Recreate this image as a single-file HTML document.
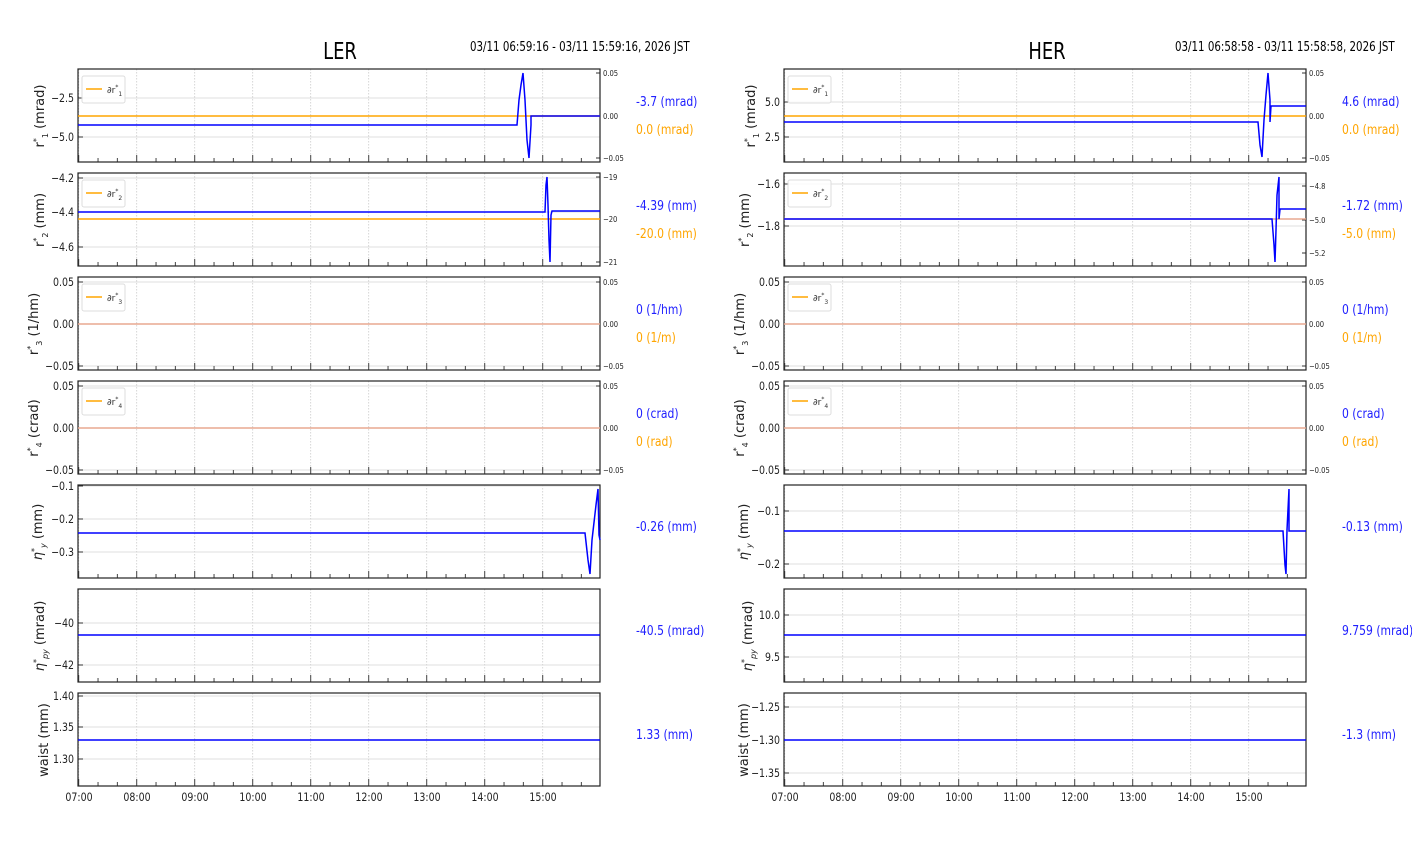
<!DOCTYPE html>
<html><head><meta charset="utf-8">
<style>
html,body{margin:0;padding:0;background:#fff;width:1412px;height:864px;overflow:hidden}
svg{display:block}
.t{font-family:"DejaVu Sans","Liberation Sans",sans-serif;font-size:11.5px;fill:#222}
.s{font-family:"DejaVu Sans","Liberation Sans",sans-serif;font-size:8px;fill:#222}
.yl{font-family:"DejaVu Sans","Liberation Sans",sans-serif;font-size:13px;fill:#222}
.b{font-family:"DejaVu Sans","Liberation Sans",sans-serif;font-size:13.5px;fill:#2020ff}
.o{font-family:"DejaVu Sans","Liberation Sans",sans-serif;font-size:13.5px;fill:#ffa500}
.ti{font-family:"DejaVu Sans","Liberation Sans",sans-serif;font-size:23px;fill:#000}
.dt{font-family:"DejaVu Sans","Liberation Sans",sans-serif;font-size:13.5px;fill:#000}
.lg{font-family:"DejaVu Sans","Liberation Sans",sans-serif;font-size:9px;fill:#333}
</style></head><body>
<svg id="s" width="1412" height="864" xmlns="http://www.w3.org/2000/svg">
<g id="grid"></g>
<g id="data"></g>
<text class="ti" x="340" y="59" text-anchor="middle">LER</text>
<text class="dt" x="470" y="51">03/11 06:59:16 - 03/11 15:59:16, 2026 JST</text>
<text class="ti" x="1047" y="59" text-anchor="middle">HER</text>
<text class="dt" x="1175" y="51">03/11 06:58:58 - 03/11 15:58:58, 2026 JST</text>

<g class="t" text-anchor="end">
<text x="74" y="102">−2.5</text><text x="74" y="141">−5.0</text>
<text x="74" y="182">−4.2</text><text x="74" y="216">−4.4</text><text x="74" y="251">−4.6</text>
<text x="74" y="286">0.05</text><text x="74" y="328">0.00</text><text x="74" y="370">−0.05</text>
<text x="74" y="390">0.05</text><text x="74" y="432">0.00</text><text x="74" y="474">−0.05</text>
<text x="74" y="490">−0.1</text><text x="74" y="523">−0.2</text><text x="74" y="556">−0.3</text>
<text x="74" y="627">−40</text><text x="74" y="669">−42</text>
<text x="74" y="700">1.40</text><text x="74" y="731">1.35</text><text x="74" y="763">1.30</text>
</g>
<g class="s">
<text x="603" y="76">0.05</text><text x="603" y="119">0.00</text><text x="603" y="161">−0.05</text>
<text x="603" y="180">−19</text><text x="603" y="222">−20</text><text x="603" y="265">−21</text>
<text x="603" y="285">0.05</text><text x="603" y="327">0.00</text><text x="603" y="369">−0.05</text>
<text x="603" y="389">0.05</text><text x="603" y="431">0.00</text><text x="603" y="473">−0.05</text>
</g>
<g class="t" text-anchor="end">
<text x="780" y="106">5.0</text><text x="780" y="141">2.5</text>
<text x="780" y="188">−1.6</text><text x="780" y="230">−1.8</text>
<text x="780" y="286">0.05</text><text x="780" y="328">0.00</text><text x="780" y="370">−0.05</text>
<text x="780" y="390">0.05</text><text x="780" y="432">0.00</text><text x="780" y="474">−0.05</text>
<text x="780" y="515">−0.1</text><text x="780" y="568">−0.2</text>
<text x="780" y="619">10.0</text><text x="780" y="661">9.5</text>
<text x="780" y="711">−1.25</text><text x="780" y="744">−1.30</text><text x="780" y="777">−1.35</text>
</g>
<g class="s">
<text x="1309" y="76">0.05</text><text x="1309" y="119">0.00</text><text x="1309" y="161">−0.05</text>
<text x="1309" y="189">−4.8</text><text x="1309" y="223">−5.0</text><text x="1309" y="256">−5.2</text>
<text x="1309" y="285">0.05</text><text x="1309" y="327">0.00</text><text x="1309" y="369">−0.05</text>
<text x="1309" y="389">0.05</text><text x="1309" y="431">0.00</text><text x="1309" y="473">−0.05</text>
</g>

<g class="t" text-anchor="middle">
<text x="79" y="801">07:00</text><text x="137" y="801">08:00</text><text x="195" y="801">09:00</text><text x="253" y="801">10:00</text><text x="311" y="801">11:00</text><text x="369" y="801">12:00</text><text x="427" y="801">13:00</text><text x="485" y="801">14:00</text><text x="543" y="801">15:00</text>
<text x="785" y="801">07:00</text><text x="843" y="801">08:00</text><text x="901" y="801">09:00</text><text x="959" y="801">10:00</text><text x="1017" y="801">11:00</text><text x="1075" y="801">12:00</text><text x="1133" y="801">13:00</text><text x="1191" y="801">14:00</text><text x="1249" y="801">15:00</text>
</g>

<g class="yl" text-anchor="middle">
<text transform="translate(44,116) rotate(-90)">r<tspan dy="-5" font-size="8">*</tspan><tspan dy="9" font-size="8">1</tspan><tspan dy="-4"> (mrad)</tspan></text>
<text transform="translate(44,220) rotate(-90)">r<tspan dy="-5" font-size="8">*</tspan><tspan dy="9" font-size="8">2</tspan><tspan dy="-4"> (mm)</tspan></text>
<text transform="translate(38,324) rotate(-90)">r<tspan dy="-5" font-size="8">*</tspan><tspan dy="9" font-size="8">3</tspan><tspan dy="-4"> (1/hm)</tspan></text>
<text transform="translate(38,428) rotate(-90)">r<tspan dy="-5" font-size="8">*</tspan><tspan dy="9" font-size="8">4</tspan><tspan dy="-4"> (crad)</tspan></text>
<text transform="translate(42,532) rotate(-90)"><tspan font-style="italic">η</tspan><tspan dy="-5" font-size="8">*</tspan><tspan dy="9" font-size="8" font-style="italic">y</tspan><tspan dy="-4"> (mm)</tspan></text>
<text transform="translate(44,636) rotate(-90)"><tspan font-style="italic">η</tspan><tspan dy="-5" font-size="8">*</tspan><tspan dy="9" font-size="8" font-style="italic">py</tspan><tspan dy="-4"> (mrad)</tspan></text>
<text transform="translate(48,740) rotate(-90)">waist (mm)</text>
<text transform="translate(755,116) rotate(-90)">r<tspan dy="-5" font-size="8">*</tspan><tspan dy="9" font-size="8">1</tspan><tspan dy="-4"> (mrad)</tspan></text>
<text transform="translate(749,220) rotate(-90)">r<tspan dy="-5" font-size="8">*</tspan><tspan dy="9" font-size="8">2</tspan><tspan dy="-4"> (mm)</tspan></text>
<text transform="translate(744,324) rotate(-90)">r<tspan dy="-5" font-size="8">*</tspan><tspan dy="9" font-size="8">3</tspan><tspan dy="-4"> (1/hm)</tspan></text>
<text transform="translate(744,428) rotate(-90)">r<tspan dy="-5" font-size="8">*</tspan><tspan dy="9" font-size="8">4</tspan><tspan dy="-4"> (crad)</tspan></text>
<text transform="translate(748,532) rotate(-90)"><tspan font-style="italic">η</tspan><tspan dy="-5" font-size="8">*</tspan><tspan dy="9" font-size="8" font-style="italic">y</tspan><tspan dy="-4"> (mm)</tspan></text>
<text transform="translate(752,636) rotate(-90)"><tspan font-style="italic">η</tspan><tspan dy="-5" font-size="8">*</tspan><tspan dy="9" font-size="8" font-style="italic">py</tspan><tspan dy="-4"> (mrad)</tspan></text>
<text transform="translate(748,740) rotate(-90)">waist (mm)</text>
</g>

<text class="b" x="636" y="106">-3.7 (mrad)</text><text class="o" x="636" y="134">0.0 (mrad)</text>
<text class="b" x="636" y="210">-4.39 (mm)</text><text class="o" x="636" y="238">-20.0 (mm)</text>
<text class="b" x="636" y="314">0 (1/hm)</text><text class="o" x="636" y="342">0 (1/m)</text>
<text class="b" x="636" y="418">0 (crad)</text><text class="o" x="636" y="446">0 (rad)</text>
<text class="b" x="636" y="531">-0.26 (mm)</text>
<text class="b" x="636" y="635">-40.5 (mrad)</text>
<text class="b" x="636" y="739">1.33 (mm)</text>
<text class="b" x="1342" y="106">4.6 (mrad)</text><text class="o" x="1342" y="134">0.0 (mrad)</text>
<text class="b" x="1342" y="210">-1.72 (mm)</text><text class="o" x="1342" y="238">-5.0 (mm)</text>
<text class="b" x="1342" y="314">0 (1/hm)</text><text class="o" x="1342" y="342">0 (1/m)</text>
<text class="b" x="1342" y="418">0 (crad)</text><text class="o" x="1342" y="446">0 (rad)</text>
<text class="b" x="1342" y="531">-0.13 (mm)</text>
<text class="b" x="1342" y="635">9.759 (mrad)</text>
<text class="b" x="1342" y="739">-1.3 (mm)</text>

<g id="leg"></g>
<g class="lg">
<text x="107" y="93">∂r<tspan dy="-4" font-size="6">*</tspan><tspan dy="7" font-size="6">1</tspan></text>
<text x="107" y="197">∂r<tspan dy="-4" font-size="6">*</tspan><tspan dy="7" font-size="6">2</tspan></text>
<text x="107" y="301">∂r<tspan dy="-4" font-size="6">*</tspan><tspan dy="7" font-size="6">3</tspan></text>
<text x="107" y="405">∂r<tspan dy="-4" font-size="6">*</tspan><tspan dy="7" font-size="6">4</tspan></text>
<text x="813" y="93">∂r<tspan dy="-4" font-size="6">*</tspan><tspan dy="7" font-size="6">1</tspan></text>
<text x="813" y="197">∂r<tspan dy="-4" font-size="6">*</tspan><tspan dy="7" font-size="6">2</tspan></text>
<text x="813" y="301">∂r<tspan dy="-4" font-size="6">*</tspan><tspan dy="7" font-size="6">3</tspan></text>
<text x="813" y="405">∂r<tspan dy="-4" font-size="6">*</tspan><tspan dy="7" font-size="6">4</tspan></text>
</g>
</svg>
<script>
var NS="http://www.w3.org/2000/svg";
function el(p,n,a){var e=document.createElementNS(NS,n);for(var k in a)e.setAttribute(k,a[k]);document.getElementById(p).appendChild(e);return e;}
var tops=[69,173,277,381,485,589,693];
var yt={L:[[98,137],[178,212,247],[282,324,366],[386,428,470],[486,519,552],[623,665],[696,727,759]],
        H:[[102,137],[184,226],[282,324,366],[386,428,470],[511,564],[615,657],[707,740,773]]};
var rt=[[73,116,158],[177,219,262],[282,324,366],[386,428,470]];
var rtH=[[73,116,158],[186,220,253],[282,324,366],[386,428,470]];
[["L",78],["H",784]].forEach(function(s){
 var x0=s[1],key=s[0];
 tops.forEach(function(t,i){
  var b=t+93;
  for(var h=0;h<9;h++){var x=x0+0.7+58*h;
   el("grid","line",{x1:x,x2:x,y1:t,y2:b,stroke:"#ccc","stroke-width":0.8,"stroke-dasharray":"1.5,1.5"});}
  yt[key][i].forEach(function(y){el("grid","line",{x1:x0,x2:x0+522,y1:y,y2:y,stroke:"#d4d4d4","stroke-width":0.8});
   el("grid","line",{x1:x0,x2:x0+5,y1:y,y2:y,stroke:"#333","stroke-width":1});});
  for(var m=-1;m<27;m++){var x=x0+0.7+58*m/3;if(x<x0||x>x0+522)continue;
   var L=(m%3==0)?7:4;el("grid","line",{x1:x,x2:x,y1:b,y2:b-L,stroke:"#444","stroke-width":1});}
  if(i<4){(key=="L"?rt:rtH)[i].forEach(function(y){el("grid","line",{x1:x0+522,x2:x0+518,y1:y,y2:y,stroke:"#333","stroke-width":1});});}
  el("grid","rect",{x:x0,y:t,width:522,height:93,fill:"none",stroke:"#222","stroke-width":1.2});
  if(i<4){el("leg","rect",{x:x0+4,y:t+7,width:43,height:27,fill:"#fff","fill-opacity":0.85,stroke:"#ddd",rx:2});
   el("leg","line",{x1:x0+8,x2:x0+24,y1:t+20,y2:t+20,stroke:"#ffa500","stroke-width":1.5});}
 });
});
function pl(pts,c,w){el("data","polyline",{points:pts,fill:"none",stroke:c,"stroke-width":w||1.5});}
pl("78,116 600,116","#ffa500");
pl("78,125 517,125 519,100 521,85 523,73 525,100 527,140 529,158 531,125 531,116 600,116","#0000ff");
pl("78,219 600,219","#ffa500");
pl("78,212 545,212 546,185 547,177 548,205 549,240 550,262 551,215 552,211 600,211","#0000ff");
pl("78,324 600,324","#e8a890");pl("78,428 600,428","#e8a890");
pl("78,533 585,533 588,560 590,574 592,540 596,505 598,489 599,535 600,540","#0000ff");
pl("78,635 600,635","#0000ff");pl("78,740 600,740","#0000ff");
pl("784,116 1306,116","#ffa500");
pl("784,122 1258,122 1260,145 1262,157 1264,120 1266,95 1268,73 1270,100 1270,122 1271,106 1306,106","#0000ff");
pl("784,219 1306,219","#e8a890");
pl("784,219 1272,219 1274,245 1275,262 1276,230 1277,195 1279,177 1279,219 1280,209 1306,209","#0000ff");
pl("784,324 1306,324","#e8a890");pl("784,428 1306,428","#e8a890");
pl("784,531 1283,531 1285,565 1286,574 1287,530 1289,489 1289,531 1306,531","#0000ff");
pl("784,635 1306,635","#0000ff");pl("784,740 1306,740","#0000ff");
// condense text
function squeeze(sel,f){document.querySelectorAll(sel).forEach(function(e){var w=e.getComputedTextLength();e.setAttribute("textLength",(w*f).toFixed(1));e.setAttribute("lengthAdjust","spacingAndGlyphs");});}
squeeze(".b,.o",0.8);squeeze(".dt",0.76);squeeze(".ti",0.78);squeeze("g.t text",0.82);squeeze("g.s text",0.85);
</script>
</body></html>
